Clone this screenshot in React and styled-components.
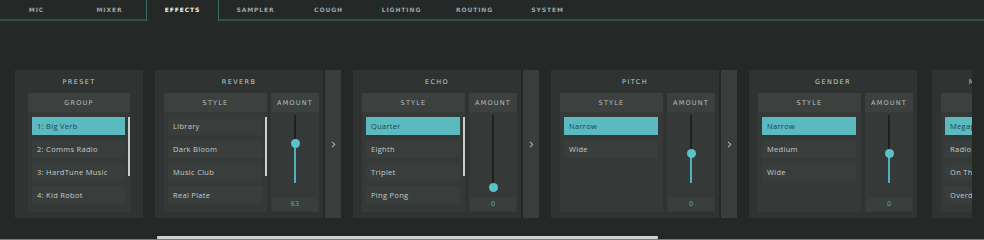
import React from "react";
import styled, { createGlobalStyle } from "styled-components";

const TABS = ["MIC", "MIXER", "EFFECTS", "SAMPLER", "COUGH", "LIGHTING", "ROUTING", "SYSTEM"];

const EFFECTS = [
  {
    title: "REVERB",
    items: ["Library", "Dark Bloom", "Music Club", "Real Plate"],
    selected: -1,
    scroll: true,
    value: 63,
    pos: 0.6,
    arrow: true,
  },
  {
    title: "ECHO",
    items: ["Quarter", "Eighth", "Triplet", "Ping Pong"],
    selected: 0,
    scroll: true,
    value: 0,
    pos: 0,
    arrow: true,
  },
  {
    title: "PITCH",
    items: ["Narrow", "Wide"],
    selected: 0,
    value: 0,
    pos: 0.47,
    arrow: true,
  },
  {
    title: "GENDER",
    items: ["Narrow", "Medium", "Wide"],
    selected: 0,
    value: 0,
    pos: 0.47,
  },
];

const GlobalStyle = createGlobalStyle`
  html, body {
    margin: 0;
    padding: 0;
    background: #242927;
  }
  body {
    width: 984px;
    height: 240px;
    overflow: hidden;
    font-family: "Open Sans", "Noto Sans", sans-serif;
  }
`;

const Screen = styled.div`
  width: 984px;
  height: 240px;
  display: flex;
  flex-direction: column;
  background: #242927;
`;

const TabBar = styled.nav`
  display: flex;
  height: 21px;
  box-sizing: border-box;
  border-bottom: 2px solid #364c4a;
`;

const Tab = styled.div`
  width: 73px;
  height: ${(p) => (p.$active ? "21px" : "19px")};
  margin-bottom: ${(p) => (p.$active ? "-2px" : "0")};
  box-sizing: border-box;
  display: flex;
  align-items: center;
  justify-content: center;
  padding-bottom: ${(p) => (p.$active ? "2px" : "0")};
  background: #242927;
  border-left: ${(p) => (p.$active ? "1.5px solid #3f6966" : "none")};
  border-right: ${(p) => (p.$active ? "1.5px solid #3f6966" : "none")};
  font-family: "DejaVu Sans", sans-serif;
  font-size: 6px;
  font-weight: bold;
  letter-spacing: 0.9px;
  color: ${(p) => (p.$active ? "#eef3f2" : "#9ca5a3")};
`;

const Row = styled.div`
  display: flex;
  gap: 12px;
  margin-top: 49px;
  height: 148px;
  width: 972px;
  box-sizing: border-box;
  padding-left: 15px;
  overflow: hidden;
  flex-shrink: 0;
`;

const Group = styled.div`
  display: flex;
  gap: 2px;
  flex-shrink: 0;
  margin-left: ${(p) => p.$shift || 0}px;
`;

const Panel = styled.section`
  width: ${(p) => p.$width}px;
  flex-shrink: 0;
  background: #2f3432;
  display: flex;
  flex-direction: column;
`;

const Title = styled.div`
  height: 23px;
  display: flex;
  align-items: center;
  justify-content: center;
  padding-top: 1px;
  box-sizing: border-box;
  font-family: "DejaVu Sans", sans-serif;
  font-size: 6.5px;
  letter-spacing: 1.4px;
  color: #c3c9c7;
  white-space: nowrap;
`;

const Body = styled.div`
  flex: 1;
  display: flex;
  gap: 4px;
  padding: ${(p) => p.$pad};
`;

const Box = styled.div`
  width: ${(p) => p.$width}px;
  flex-shrink: 0;
  background: #353a38;
  display: flex;
  flex-direction: column;
`;

const BoxHeader = styled.div`
  height: 19px;
  flex-shrink: 0;
  background: #3c413f;
  display: flex;
  align-items: center;
  justify-content: center;
  font-family: "DejaVu Sans", sans-serif;
  font-size: 6.5px;
  letter-spacing: 1.2px;
  color: #b9bfbd;
`;

const List = styled.div`
  position: relative;
  display: flex;
  flex-direction: column;
  gap: 5px;
  padding: 5px 5px 0 4px;
`;

const Item = styled.div`
  height: 18px;
  display: flex;
  align-items: center;
  padding-left: 5px;
  background: ${(p) => (p.$selected ? "#5bb9c0" : "#393e3c")};
  color: ${(p) => (p.$selected ? "#1f4548" : "#c5cac8")};
  font-size: 7.5px;
  letter-spacing: 0.3px;
  white-space: nowrap;
  overflow: hidden;
`;

const ScrollThumb = styled.div`
  position: absolute;
  right: 0;
  top: 5px;
  width: 2px;
  height: 59px;
  background: #c9cecd;
`;

const Amount = styled.div`
  width: 48px;
  flex-shrink: 0;
  background: #353a38;
  display: flex;
  flex-direction: column;
`;

const SliderArea = styled.div`
  flex: 1;
  position: relative;
`;

const Track = styled.div`
  position: absolute;
  left: 50%;
  top: 3px;
  width: 2px;
  height: 68px;
  margin-left: -1px;
  background: #1d2120;
`;

const Fill = styled.div`
  position: absolute;
  left: 50%;
  width: 2px;
  margin-left: -1px;
  background: #4fb2b9;
`;

const Thumb = styled.div`
  position: absolute;
  left: 50%;
  width: 9px;
  height: 9px;
  margin: -4.5px 0 0 -4.5px;
  border-radius: 50%;
  background: #5cc1c8;
`;

const Value = styled.div`
  height: 14px;
  margin: 0 1px 1px;
  background: #3a3f3d;
  display: flex;
  align-items: center;
  justify-content: center;
  font-family: "DejaVu Sans", sans-serif;
  font-size: 6.5px;
  color: #4fa8ae;
`;

const Arrow = styled.div`
  width: 16px;
  flex-shrink: 0;
  background: #393e3c;
  display: flex;
  align-items: center;
  justify-content: center;
`;

const Spacer = styled.div`
  flex: 1;
`;

const ScrollTrack = styled.div`
  height: 4px;
  flex-shrink: 0;
  box-sizing: border-box;
  border-bottom: 1px solid #5b8683;
  display: flex;
`;

const ScrollBarThumb = styled.div`
  margin-left: 157px;
  width: 501px;
  height: 3px;
  background: #cdd2d1;
  border-radius: 1px;
`;

const Chevron = () => (
  <svg width="5" height="7" viewBox="0 0 5 7">
    <path d="M1 0.8 L3.8 3.5 L1 6.2" fill="none" stroke="#a3abaa" strokeWidth="1.1" />
  </svg>
);

const ListBox = ({ header, items, selected, scroll, width }) => (
  <Box $width={width}>
    <BoxHeader>{header}</BoxHeader>
    <List>
      {items.map((it, i) => (
        <Item key={it} $selected={i === selected}>
          {it}
        </Item>
      ))}
      {scroll && <ScrollThumb />}
    </List>
  </Box>
);

const Slider = ({ value, pos }) => {
  // thumb travels from y=75 (min) up to y=3 (max) inside the slider area
  const center = 75 - pos * 72;
  const fillH = Math.max(0, 71 - center);
  return (
    <Amount>
      <BoxHeader>AMOUNT</BoxHeader>
      <SliderArea>
        <Track />
        {fillH > 0 && <Fill style={{ top: center, height: fillH }} />}
        <Thumb style={{ top: center }} />
      </SliderArea>
      <Value>{value}</Value>
    </Amount>
  );
};

const EffectPanel = ({ fx }) => (
  <Group>
    <Panel $width={168}>
      <Title>{fx.title}</Title>
      <Body $pad="0 4px 6px 9px">
        <ListBox header="STYLE" items={fx.items} selected={fx.selected} scroll={fx.scroll} width={103} />
        <Slider value={fx.value} pos={fx.pos} />
      </Body>
    </Panel>
    {fx.arrow && (
      <Arrow>
        <Chevron />
      </Arrow>
    )}
  </Group>
);

export default function App() {
  return (
    <Screen>
      <GlobalStyle />
      <TabBar>
        {TABS.map((t) => (
          <Tab key={t} $active={t === "EFFECTS"}>
            {t}
          </Tab>
        ))}
      </TabBar>
      <Row>
        <Group>
          <Panel $width={128}>
            <Title>PRESET</Title>
            <Body $pad="0 13px 6px 13px">
              <ListBox
                header="GROUP"
                items={["1: Big Verb", "2: Comms Radio", "3: HardTune Music", "4: Kid Robot"]}
                selected={0}
                scroll
                width={102}
              />
            </Body>
          </Panel>
        </Group>
        {EFFECTS.map((fx) => (
          <EffectPanel key={fx.title} fx={fx} />
        ))}
        <Group $shift={3}>
          <Panel $width={128}>
            <Title>MEGAPHONE</Title>
            <Body $pad="0 13px 6px 9px">
              <ListBox
                header="STYLE"
                items={["Megaphone", "Radio", "On The Phone", "Overdrive"]}
                selected={0}
                width={103}
              />
            </Body>
          </Panel>
        </Group>
      </Row>
      <Spacer />
      <ScrollTrack>
        <ScrollBarThumb />
      </ScrollTrack>
    </Screen>
  );
}
